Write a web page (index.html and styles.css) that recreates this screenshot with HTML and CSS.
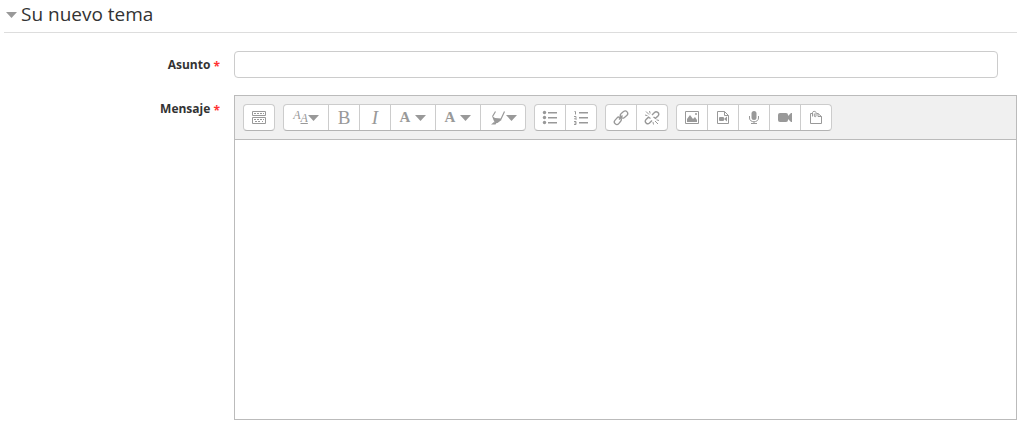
FILE: index.html
```
<!DOCTYPE html>
<html lang="es">
<head>
  <meta charset="UTF-8">
  <meta name="viewport" content="width=device-width, initial-scale=1.0">
  <title>Su nuevo tema</title>
  <link rel="stylesheet" href="styles.css">
</head>
<body>
  <form class="topic-form">
    <h3 class="form-title"><a href="#topicFields"><svg class="caret" width="11" height="6" viewBox="0 0 11 6"><path d="M0 0h11L5.500 6z"/></svg>Su nuevo tema</a></h3>

    <div id="topicFields">
      <div class="form-row">
        <label for="subject">Asunto <span class="required">*</span></label>
        <input type="text" id="subject" name="subject" required>
      </div>

      <div class="form-row">
        <label for="message">Mensaje <span class="required">*</span></label>
        <div class="editor">
          <div class="toolbar">
            <!-- Collapse -->
            <div class="group">
              <button type="button" title="Mostrar más botones">
                <svg width="16" height="16" viewBox="0 0 16 16"><g fill="none" stroke="#999"><path d="M1.500 1.500h13v4h-13z"/><path d="M1.500 7.500h13v6h-13z"/><path d="M3 3.500h10M3 9.500h10" stroke-dasharray="2 1"/><path d="M4 11.500h2M7 11.500h2M11 11.500h1"/></g></svg>
              </button>
            </div>

            <!-- Text style -->
            <div class="group">
              <button type="button" class="menu" title="Estilos de párrafo">
                <span class="styles"><i>A</i><i class="big">A</i></span><svg class="caret" width="11" height="6" viewBox="0 0 11 6"><path d="M0 0h11L5.500 6z"/></svg>
              </button>
              <button type="button" class="letter" title="Negrita">B</button>
              <button type="button" class="letter italic" title="Cursiva">I</button>
              <button type="button" class="menu color" title="Color de letra">
                <b>A</b><svg class="caret" width="11" height="6" viewBox="0 0 11 6"><path d="M0 0h11L5.500 6z"/></svg>
              </button>
              <button type="button" class="menu color" title="Tipo de letra">
                <b>A</b><svg class="caret" width="11" height="6" viewBox="0 0 11 6"><path d="M0 0h11L5.500 6z"/></svg>
              </button>
              <button type="button" class="menu brush" title="Color de fondo">
                <svg width="16" height="16" viewBox="0 0 16 16"><path d="M5.500 1.500L2.500 6.500M14.500 1.500L11 9" fill="none" stroke="#999" stroke-width="1.200"/><path d="M2 6l3 2 6 .500.500 1.500-4 3H5L3.500 10z"/><path d="M1 14.500L4 12l2.500 1-1 1.500z"/></svg><svg class="caret" width="11" height="6" viewBox="0 0 11 6"><path d="M0 0h11L5.500 6z"/></svg>
              </button>
            </div>

            <!-- Lists -->
            <div class="group">
              <button type="button" title="Lista sin numerar">
                <svg width="16" height="16" viewBox="0 0 16 16"><circle cx="2.500" cy="2.500" r="1.700"/><circle cx="2.500" cy="7.500" r="1.700"/><circle cx="2.500" cy="12.500" r="1.700"/><path d="M6 2h9v1.500H6zM6 7h9v1.500H6zM6 12h9v1.500H6z"/></svg>
              </button>
              <button type="button" title="Lista numerada">
                <svg width="16" height="16" viewBox="0 0 16 16"><path d="M6 2h9v1.500H6zM6 7h9v1.500H6zM6 12h9v1.500H6z"/><path d="M1.500 1.500h1v3M1 6.500h2v1L1.500 9H4M1 11.500h2v3H1M1.500 13H3" fill="none" stroke="#999"/></svg>
              </button>
            </div>

            <!-- Links -->
            <div class="group">
              <button type="button" title="Enlace">
                <svg width="16" height="16" viewBox="0 0 16 16"><g fill="none" stroke="#999" stroke-width="1.300"><rect x="-4" y="-2.500" width="8" height="5" rx="2.500" transform="translate(4.800 10.800) rotate(-50)"/><rect x="-4" y="-2.500" width="8" height="5" rx="2.500" transform="translate(11 4.500) rotate(-40)"/><path d="M6 9.500l3.500-4"/></g></svg>
              </button>
              <button type="button" title="Quitar enlace">
                <svg width="16" height="16" viewBox="0 0 16 16"><g fill="none" stroke="#999" stroke-width="1.400"><path d="M8 5l2.500-2.500c2-2 5.500.7 3.700 3.200L11.500 8.300 9.500 7M8 10.500l-2.500 2.500c-2 2-5.500-.7-3.700-3.200L4.500 7.200l2 1.300"/><path d="M2 1.500l3 3M5.500 1l.7 2.500M1 5l2.500.7M14 14l-3-3M9.500 14.500l-.5-2.500M15 10.500l-2.500-.7" stroke-width="1"/></g></svg>
              </button>
            </div>

            <!-- Media and files -->
            <div class="group">
              <button type="button" title="Imagen">
                <svg width="16" height="16" viewBox="0 0 16 16"><path d="M1.500 1.500h13v12h-13z" fill="none" stroke="#999"/><path d="M3 12V9l3-4 3 4 2-2 2 3v2z"/><circle cx="12" cy="4" r="1"/></svg>
              </button>
              <button type="button" title="Multimedia">
                <svg width="16" height="16" viewBox="0 0 16 16"><path d="M2.500 1.500h7l4 4v8h-11zM9.500 1.500v4h4" fill="none" stroke="#999"/><rect x="4" y="7" width="5" height="4" rx="1"/><path d="M9 9L12 6.500v5z"/></svg>
              </button>
              <button type="button" title="Grabar audio">
                <svg width="16" height="16" viewBox="0 0 16 16"><rect x="5.500" y="1" width="5" height="9" rx="2.500"/><path d="M3.500 6v2c0 5 9 5 9 0V6M8 12v2M5 13.500h6" fill="none" stroke="#999"/></svg>
              </button>
              <button type="button" title="Grabar vídeo">
                <svg width="16" height="16" viewBox="0 0 16 16"><rect x="1" y="3" width="10" height="9" rx="2"/><path d="M11 6l3-3h1v9h-1l-3-3z"/></svg>
              </button>
              <button type="button" title="Gestionar archivos">
                <svg width="16" height="16" viewBox="0 0 16 16"><g fill="none" stroke="#999"><path d="M4 3.500H2.500v10h11v-7l-3.500-3H8.500M10 3.500v3h3.500"/><path d="M4.500 6.500V2.500c0-1.500 3.500-1.500 3.500 0V6c0 1-1.700 1-1.700 0V3.500"/></g></svg>
              </button>
            </div>
          </div>
          <textarea id="message" name="message" required></textarea>
        </div>
      </div>
    </div>
  </form>
</body>
</html>
```
FILE: styles.css
```
* {
  box-sizing: border-box;
}
body {
  margin: 0;
  padding: 0 7px 0 4px;
  background: #fff;
  color: #333;
  font-family: "Open Sans", sans-serif;
  font-size: 12px;
}
.form-title {
  margin: 0 0 18px;
  padding: 2px 2px 5px;
  border-bottom: 1px solid #ddd;
  font-size: 19px;
  font-weight: 400;
  line-height: 25px;
}
.form-title a {
  display: flex;
  align-items: center;
  gap: 4px;
  color: #333;
  text-decoration: none;
}
svg {
  display: block;
  flex: none;
  fill: #999;
}
.form-row {
  display: flex;
  align-items: flex-start;
  gap: 14px;
  margin-bottom: 17px;
}
.form-row label {
  flex: none;
  width: 216px;
  padding-top: 4px;
  font-weight: 700;
  line-height: 20px;
  text-align: right;
}
.required {
  color: #f33;
  vertical-align: -2px;
  line-height: 1;
}
#subject {
  flex: 1;
  min-width: 0;
  height: 27px;
  margin-right: 19px;
  padding: 4px 6px;
  border: 1px solid #ccc;
  border-radius: 4px;
  font: inherit;
}
.editor {
  flex: 1;
  min-width: 0;
  border: 1px solid #bbb;
}
.toolbar {
  display: flex;
  flex-wrap: wrap;
  gap: 8px;
  padding: 8px;
  border-bottom: 1px solid #bbb;
  background: #f0f0f0;
}
.group {
  display: flex;
  border: 1px solid #ccc;
  border-bottom-color: #b3b3b3;
  border-radius: 4px;
  background: #fff;
  overflow: hidden;
}
.group button {
  display: flex;
  align-items: center;
  justify-content: center;
  box-sizing: content-box;
  width: 30px;
  height: 25px;
  padding: 0;
  border: 0;
  background: none;
  color: #999;
  font-family: "Liberation Serif", serif;
  cursor: pointer;
}
.group button + button {
  border-left: 1px solid #ccc;
}
.group button:hover {
  background: #eee;
}
.group .menu {
  width: 44px;
}
.group .color {
  gap: 5px;
  font-size: 15px;
}
.group .letter {
  font-size: 19px;
}
.group .italic {
  font-style: italic;
}
.styles {
  display: flex;
  align-items: flex-start;
  font-size: 12px;
  line-height: 12px;
}
.styles .big {
  font-size: 12px;
  line-height: 18px;
  text-decoration: underline;
}
#message {
  display: block;
  width: 100%;
  height: 279px;
  padding: 8px;
  border: 0;
  resize: none;
  font: inherit;
}
```
